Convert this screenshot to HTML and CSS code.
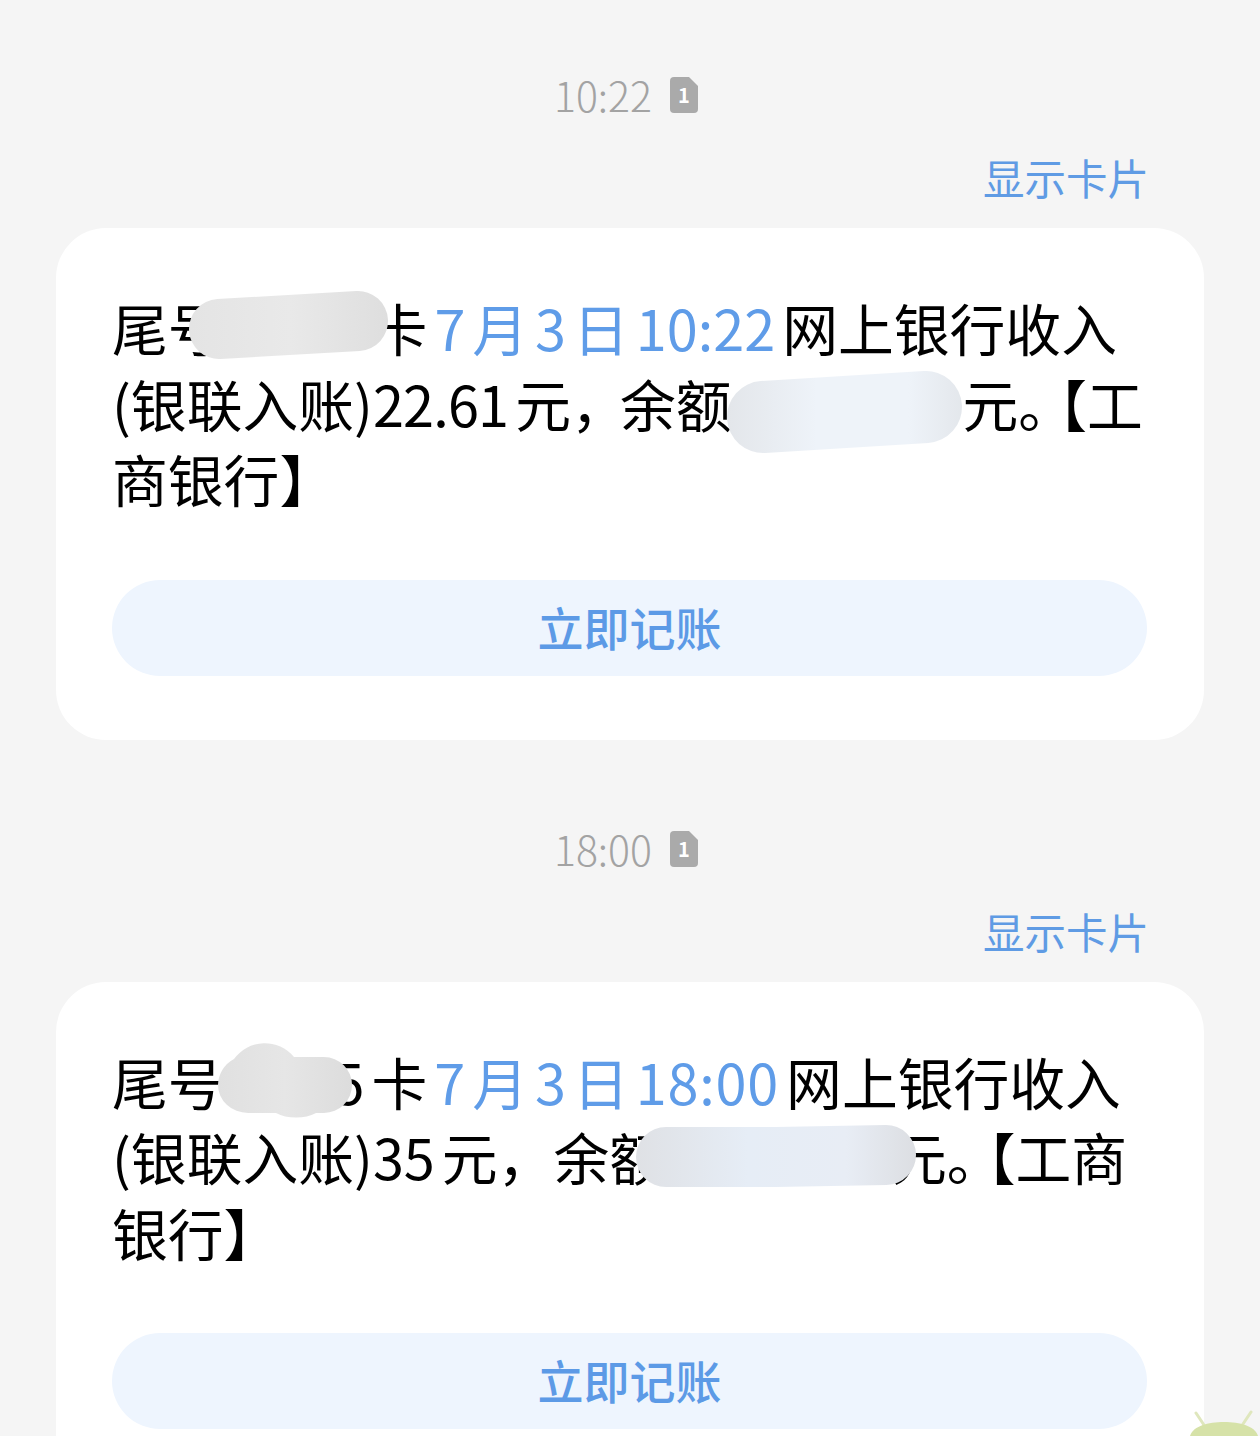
FILE: index.html
```html
<!DOCTYPE html>
<html lang="zh-CN">
<head>
  <meta charset="UTF-8" />
  <title>短信</title>
  <link rel="stylesheet" href="styles.css">
</head>
<body>
  <div class="thread">

    <div class="msg">
      <div class="time-row">
        <span class="time">10:22</span>
        <svg class="sim" width="28" height="36" viewBox="0 0 28 36"><path d="M4 0H19L28 9V32a4 4 0 0 1-4 4H4a4 4 0 0 1-4-4V4a4 4 0 0 1 4-4Z"/><text x="14" y="26" text-anchor="middle">1</text></svg>
      </div>
      <div class="show-card">显示卡片</div>
      <div class="card">
        <p class="sms">尾号<span class="hide-num"></span>卡<span class="link">7月3日10:22</span>网上银行收入(银联入账)<span class="tight">22.61</span>元<span class="comma">，</span>余额<span class="hide-bal-a"></span>元。<span class="bracket">【</span>工商银行】</p>
        <button class="book">立即记账</button>
        <svg class="smear" viewBox="0 0 1148 512">
          <defs>
            <linearGradient id="g1" gradientUnits="userSpaceOnUse" x1="134" y1="0" x2="334" y2="0">
              <stop offset="0" stop-color="#e4e4e4"/><stop offset=".5" stop-color="#e9e9e9"/><stop offset="1" stop-color="#dedede"/>
            </linearGradient>
            <linearGradient id="g2" gradientUnits="userSpaceOnUse" x1="670" y1="0" x2="930" y2="0">
              <stop offset="0" stop-color="#e3e6ea"/><stop offset=".35" stop-color="#eef3f9"/><stop offset=".7" stop-color="#eef3f9"/><stop offset="1" stop-color="#dfe2e6"/>
            </linearGradient>
          </defs>
          <path class="s1" d="M163 101L302 93" stroke="url(#g1)"/>
          <path class="s2" d="M707 189L870 179" stroke="url(#g2)"/>
        </svg>
      </div>
    </div>

    <div class="msg">
      <div class="time-row">
        <span class="time">18:00</span>
        <svg class="sim" width="28" height="36" viewBox="0 0 28 36"><path d="M4 0H19L28 9V32a4 4 0 0 1-4 4H4a4 4 0 0 1-4-4V4a4 4 0 0 1 4-4Z"/><text x="14" y="26" text-anchor="middle">1</text></svg>
      </div>
      <div class="show-card">显示卡片</div>
      <div class="card">
        <p class="sms">尾号<span class="hide-num b"></span>5卡<span class="link">7月3日<span class="wide">18:00</span></span>网上银行收入(银联入账)35元，余额<span class="hide-bal-b"></span>元。<span class="bracket">【</span>工商银行】</p>
        <button class="book">立即记账</button>
        <svg class="smear" viewBox="0 0 1148 512">
          <defs>
            <linearGradient id="g3" gradientUnits="userSpaceOnUse" x1="162" y1="0" x2="296" y2="0">
              <stop offset="0" stop-color="#e0e0e0"/><stop offset=".5" stop-color="#e6e6e6"/><stop offset="1" stop-color="#dcdcdc"/>
            </linearGradient>
            <linearGradient id="g4" gradientUnits="userSpaceOnUse" x1="580" y1="0" x2="860" y2="0">
              <stop offset="0" stop-color="#dfe1e5"/><stop offset=".4" stop-color="#e6edf6"/><stop offset=".75" stop-color="#e8edf5"/><stop offset="1" stop-color="#dcdee2"/>
            </linearGradient>
          </defs>
          <path d="M162 103a30 30 0 0 1 16-26a38 38 0 0 1 60-2h30a28 28 0 0 1 28 28 28 28 0 0 1-28 28h-8a30 18 0 0 1-40 0h-28a30 28 0 0 1-30-28Z" fill="url(#g3)"/>
          <path class="s3" d="M610 175L720 175L830 173" stroke="url(#g4)"/>
        </svg>
      </div>
    </div>

  </div>

  <!-- app watermark in the corner -->
  <svg class="droid" width="70" height="26" viewBox="0 0 70 26">
    <path d="M6 3L14 15M61 2L53 14" stroke="#dfe7bd" stroke-width="3" stroke-linecap="round" fill="none"/>
    <path d="M0 26C3 16 18 12 34 12S65 16 68 26Z" fill="#d6e2a8"/>
  </svg>
</body>
</html>
```

FILE: styles.css
```css
html, body {
  height: 1436px;
  overflow: hidden;
}
body {
  margin: 0;
  background: #f5f5f5;
  color: #000;
  font-family: "Noto Sans CJK SC", "Noto Sans", sans-serif;
  position: relative;
}
.thread {
  padding: 76px 56px 0;
  display: flex;
  flex-direction: column;
  gap: 90px;
}
.time-row {
  display: flex;
  justify-content: center;
  align-items: center;
  gap: 18px;
  height: 40px;
  padding-right: 8px;
}
.time {
  font-size: 41px;
  font-weight: 300;
  color: #a3a3a3;
  line-height: 40px;
  padding-bottom: 4px;
}
.sim {
  fill: #aaa;
  margin-top: -2px;
}
.sim text {
  fill: #fff;
  font-size: 20px;
  font-weight: 700;
}
.show-card {
  margin-top: 40px;
  height: 48px;
  line-height: 42px;
  text-align: right;
  padding-right: 55px;
  font-size: 41.5px;
  color: #5f9be4;
}
.card {
  position: relative;
  margin-top: 24px;
  background: #fff;
  border-radius: 50px;
  padding: 61px 57px 64px 56px;
}
.sms {
  margin: 0;
  font-size: 55.8px;
  line-height: 75.5px;
  text-autospace: normal;
}
.link {
  color: #5f9ce8;
}
.tight {
  letter-spacing: -0.8px;
}
.wide {
  letter-spacing: 0.8px;
}
.comma {
  margin-right: -7px;
}
.bracket {
  margin-left: -15px;
}
.hide-num {
  display: inline-block;
  width: 148px;
}
.hide-num.b {
  width: 110px;
}
.hide-bal-a {
  display: inline-block;
  width: 231px;
}
.hide-bal-b {
  display: inline-block;
  width: 226px;
}
.book {
  display: block;
  width: 100%;
  height: 96px;
  margin-top: 64px;
  padding: 0 0 4px;
  border: none;
  border-radius: 48px;
  background: #eef5fe;
  color: #5c9ae6;
  font-family: inherit;
  font-size: 46px;
  font-weight: 500;
}
.smear {
  position: absolute;
  left: 0;
  top: 0;
  width: 1148px;
  height: 512px;
  fill: none;
  pointer-events: none;
}
.smear path {
  stroke-linecap: round;
}
.s1 {
  stroke-width: 60px;
}
.s2 {
  stroke-width: 72px;
}
.s3 {
  stroke-width: 60px;
}
.droid {
  position: absolute;
  right: 0;
  bottom: 0;
}
```
